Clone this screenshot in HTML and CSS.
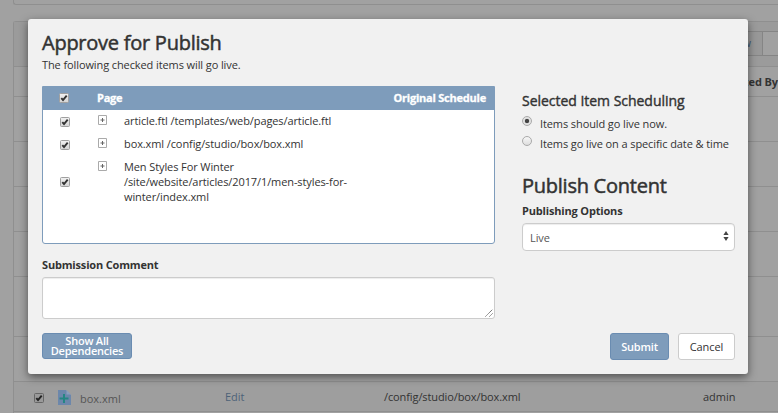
FILE: index.html
```html
<!DOCTYPE html>
<html lang="en">
<head>
<meta charset="utf-8">
<title>Approve for Publish</title>
<link rel="stylesheet" href="styles.css">
</head>
<body>
<svg width="0" height="0" class="defs">
  <defs>
    <linearGradient id="face" x1="0" y1="0" x2="0" y2="1"><stop offset="0" stop-color="#f2f2f2"/><stop offset="1" stop-color="#d4d4d4"/></linearGradient>
    <symbol id="check" viewBox="0 0 10 10"><rect x=".5" y=".5" width="9" height="9" rx="1" fill="url(#face)" stroke="#a0a0a0"/><path d="M2.3 5.2 4 7 7.7 2.6" fill="none" stroke="#333" stroke-width="1.9"/></symbol>
    <symbol id="check-dim" viewBox="0 0 10 10"><rect x=".5" y=".5" width="9" height="9" rx="1" fill="#999" stroke="#666"/><path d="M2.3 5.2 4 7 7.7 2.6" fill="none" stroke="#222" stroke-width="1.9"/></symbol>
    <symbol id="plus" viewBox="0 0 9 10"><path d="M.5.5h8v9h-8z" fill="#fff" stroke="#aaa"/><path d="M2.5 5h4M4.5 3v4" stroke="#666"/></symbol>
  </defs>
</svg>
<div class="page">
  <div class="panel-end"></div>
  <div class="dashboard">
    <div class="bar"><div class="group"><span>Show</span><i></i></div></div>
    <div class="columns">Last Edited By</div>
    <div class="line"></div>
    <div class="line"></div>
    <div class="line"></div>
    <div class="line"></div>
    <div class="line tall"></div>
    <div class="line"></div>
    <div class="item">
      <svg class="tick"><use href="#check-dim"/></svg>
      <svg class="file" viewBox="0 0 13 15"><path d="M0 0h8l5 5v10H0z" fill="#6c87ab"/><path d="M8.5 0v4.5H13z" fill="#8a9fbd"/><path d="M6 4v9M1.5 8.5h9" stroke="#248683" stroke-width="2"/></svg>
      <span class="name">box.xml</span>
      <span class="edit">Edit</span>
      <span class="path">/config/studio/box/box.xml</span>
      <span class="user">admin</span>
    </div>
  </div>
</div>
<div class="modal">
  <div class="main">
    <h1>Approve for Publish</h1>
    <p class="lead">The following checked items will go live.</p>
    <div class="table">
      <div class="row head"><svg class="tick"><use href="#check"/></svg><b class="page-title">Page</b><b class="schedule">Original Schedule</b></div>
      <div class="row"><svg class="tick"><use href="#check"/></svg><svg class="plus"><use href="#plus"/></svg><span>article.ftl /templates/web/pages/article.ftl</span></div>
      <div class="row"><svg class="tick"><use href="#check"/></svg><svg class="plus"><use href="#plus"/></svg><span>box.xml /config/studio/box/box.xml</span></div>
      <div class="row long"><svg class="tick"><use href="#check"/></svg><svg class="plus"><use href="#plus"/></svg><span>Men Styles For Winter<br>/site/website/articles/2017/1/men-styles-for-<br>winter/index.xml</span></div>
    </div>
    <div class="label comment-label">Submission Comment</div>
    <div class="comment"><svg viewBox="0 0 8 8"><path d="M.5 7.5l7-7M4.5 7.5l3-3" stroke="#555" stroke-dasharray="1.1 .5"/></svg></div>
    <button class="blue deps">Show All<br>Dependencies</button>
  </div>
  <div class="side">
    <h2>Selected Item Scheduling</h2>
    <div class="choice"><i class="radio on"></i><span>Items should go live now.</span></div>
    <div class="choice"><i class="radio"></i><span>Items go live on a specific date &amp; time</span></div>
    <h3>Publish Content</h3>
    <div class="label options-label">Publishing Options</div>
    <div class="select"><span>Live</span><svg viewBox="0 0 6 10"><path d="M3 0l2.6 4H.4zM3 10l2.6-4H.4z" fill="#444"/></svg></div>
    <div class="actions"><button class="blue submit">Submit</button><button class="cancel">Cancel</button></div>
  </div>
</div>
</body>
</html>
```
FILE: styles.css
```css
* { box-sizing: border-box; }
body { margin: 0; width: 778px; height: 413px; overflow: hidden; background: #a1a1a1; font: 11px/15px "Open Sans", sans-serif; letter-spacing: -.1px; color: #333; white-space: nowrap; }
svg { display: block; flex: none; }
.defs { position: absolute; }
h1, h2, h3, p { margin: 0; }
.page { height: 413px; overflow: hidden; padding-left: 13px; }
.panel-end { height: 5px; border: solid #8f8f8f; border-width: 0 0 1px 1px; border-bottom-left-radius: 3px; }
.dashboard { margin-top: 16px; border: solid #8f8f8f; border-width: 1px 0 0 1px; border-top-left-radius: 3px; height: 400px; }
.bar { height: 45px; padding-top: 9px; background: #9b9b9b; border-bottom: 1px solid #8f8f8f; display: flex; justify-content: flex-end; }
.group { display: flex; height: 25px; border: solid #858585; border-width: 1px 0; background: #989898; color: #3f5873; line-height: 22px; }
.group i { width: 16px; margin-left: 11px; border-left: 1px solid #858585; background: #a1a1a1; }
.columns { height: 30px; padding-top: 7px; border-bottom: 1px solid #8f8f8f; font-weight: 700; text-align: right; }
.line { height: 45px; border-bottom: 1px solid #8f8f8f; }
.tall { height: 60px; }
.item { height: 30px; background: #9e9e9e; border-bottom: 1px solid #8f8f8f; display: flex; align-items: center; }
.tick { width: 10px; height: 10px; }
.item .tick { margin: 2px 0 0 20px; }
.file { width: 13px; height: 15px; margin: 2px 0 0 14px; }
.name { width: 145px; margin-left: 9px; padding-top: 3px; color: #555; letter-spacing: 0; }
.edit { width: 159px; color: #4d6278; letter-spacing: 0; }
.path { width: 319px; }
.user { letter-spacing: 0; }

.modal { position: absolute; left: 28px; top: 19px; width: 720px; height: 355px; padding: 13px 13px 0 14px; display: grid; grid-template-columns: 453px 213px; gap: 27px; background: #f1f1f1; border-radius: 3px; box-shadow: 0 3px 9px rgba(0,0,0,.5); }
h1, h3 { font-size: 20px; font-weight: 400; line-height: 22px; letter-spacing: -.25px; -webkit-text-stroke: .5px #333; }
.lead { height: 16px; margin-top: 3px; line-height: 15px; }
.table { height: 158px; margin-top: 13px; border: 1px solid #7e9cbb; border-radius: 0 0 3px 3px; background: #fff; }
.row { display: flex; height: 23px; align-items: center; }
.row span, .head b { margin-bottom: 2px; }
.row .tick { margin-left: 17px; }
.plus { width: 9px; height: 10px; margin: 0 17px 3px 28px; }
.head { background: #7e9cbb; color: #fff; }
.row.head .tick { margin: 0 0 1px 16px; }
.page-title { margin-left: 28px; }
.schedule { margin-left: auto; margin-right: 8px; }
.head b { font-weight: 700; letter-spacing: -.22px; -webkit-text-stroke: .3px #fff; }
.long { height: 51px; }
.long span { margin-bottom: 0; }
.long .plus { align-self: flex-start; margin-top: 5px; }
.label { font-weight: 700; letter-spacing: -.17px; }
.comment-label { margin-top: 13px; height: 20px; }
.comment { height: 42px; border: 1px solid #ccc; border-radius: 3px; background: #fff; box-shadow: inset 0 1px 1px rgba(0,0,0,.075); display: flex; align-items: flex-end; justify-content: flex-end; padding: 1px; }
.comment svg { width: 8px; height: 8px; }
button { margin: 0; padding: 0; font: inherit; letter-spacing: -.1px; border-radius: 3px; }
.blue { background: #7e9cbb; border: 1px solid #6a8cb1; color: #fff; font-weight: 600; letter-spacing: -.2px; }
.deps { display: block; margin-top: 14px; width: 90px; height: 26px; line-height: 10px; }
h2 { margin-top: 60px; font-size: 14px; font-weight: 400; line-height: 17px; letter-spacing: -.03px; -webkit-text-stroke: .4px #333; }
.choice { height: 20px; display: flex; }
h2 + .choice { margin-top: 7px; }
.radio { width: 10px; height: 10px; margin-right: 8px; border: 1px solid #aaa; border-radius: 50%; background: linear-gradient(#f7f7f7, #ddd); }
.on { background: radial-gradient(circle, #444 0 1.8px, #e2e2e2 2.6px); }
h3 { margin-top: 19px; }
.options-label { margin-top: 6px; height: 20px; }
.select { height: 28px; display: flex; justify-content: space-between; align-items: center; padding: 0 5px 0 7px; background: #fff; border: 1px solid #ccc; border-radius: 4px; box-shadow: inset 0 1px 1px rgba(0,0,0,.075); color: #555; }
.select svg { width: 6px; height: 10px; margin-bottom: 2px; }
.actions { margin-top: 82px; display: flex; justify-content: flex-end; gap: 9px; }
.actions button { height: 27px; }
.submit { width: 59px; }
.cancel { width: 57px; background: #fff; border: 1px solid #ccc; color: #333; }
```
